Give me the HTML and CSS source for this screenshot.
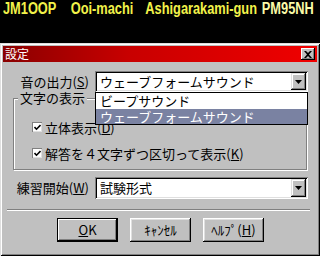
FILE: index.html
```html
<!DOCTYPE html>
<html lang="ja">
<head>
  <meta charset="UTF-8">
  <title>設定</title>
  <link rel="stylesheet" href="styles.css">
</head>
<body>

  <div class="topbar">
    <div class="callsign">
      <span class="call">JM1OOP</span>
      <span class="town">Ooi-machi</span>
      <span class="county">Ashigarakami-gun</span>
      <span class="grid">PM95NH</span>
    </div>
  </div>

  <div class="dialog">
    <div class="titlebar">
      <span class="title">設定</span>
      <span class="close">
        <svg width="8" height="7" viewBox="0 0 8 7"><path d="M0 0h2l2 2 2-2h2L5 3.5 8 7H6L4 5 2 7H0l3-3.5z" fill="#000"/></svg>
      </span>
    </div>

    <div class="body">
      <div class="row">
        <label class="label">音の出力(<u>S</u>)</label>
        <div class="combo">
          <span class="value">ウェーブフォームサウンド</span>
          <span class="drop"><svg width="7" height="4" viewBox="0 0 7 4"><path d="M0 0h7L3.5 4z" fill="#000"/></svg></span>
          <ul class="droplist">
            <li>ビープサウンド</li>
            <li class="selected">ウェーブフォームサウンド</li>
          </ul>
        </div>
      </div>

      <div class="group">
        <span class="legend">文字の表示</span>
        <div class="check">
          <span class="box"><svg width="7" height="7" viewBox="0 0 7 7"><path d="M0.5 3l2 2.2L6.5 1" stroke="#000" stroke-width="1.6" fill="none"/></svg></span>
          立体表示(<u>D</u>)
        </div>
        <div class="check">
          <span class="box"><svg width="7" height="7" viewBox="0 0 7 7"><path d="M0.5 3l2 2.2L6.5 1" stroke="#000" stroke-width="1.6" fill="none"/></svg></span>
          解答を４文字ずつ区切って表示(<u>K</u>)
        </div>
      </div>

      <div class="row row-start">
        <label class="label">練習開始(<u>W</u>)</label>
        <div class="combo tall">
          <span class="value">試験形式</span>
          <span class="drop"><svg width="7" height="4" viewBox="0 0 7 4"><path d="M0 0h7L3.5 4z" fill="#000"/></svg></span>
        </div>
      </div>

      <div class="separator"></div>

      <div class="buttons">
        <button class="btn default"><u>O</u>K</button>
        <button class="btn">ｷｬﾝｾﾙ</button>
        <button class="btn">ﾍﾙﾌﾟ(<u>H</u>)</button>
      </div>
    </div>
  </div>

</body>
</html>
```

FILE: styles.css
```css
* {
  box-sizing: border-box;
}

body {
  margin: 0;
  width: 320px;
  height: 256px;
  overflow: hidden;
  background: #000;
  font-family: "Noto Sans CJK JP", "Liberation Sans", sans-serif;
  font-size: 13px;
  color: #000;
}

/* 上の黒い帯 */
.topbar {
  height: 43px;
  padding-left: 3px;
  white-space: nowrap;
  overflow: hidden;
}

.callsign {
  display: flex;
  transform: scaleX(0.8);
  transform-origin: left top;
  font: bold 16px/18px "Liberation Sans", Arial, sans-serif;
  color: #f2f24a;
}

.town { margin-left: 18px; }
.county { margin-left: 15px; }
.grid { margin-left: 6px; color: #fafaa8; }

/* ダイアログ */
.dialog {
  height: 213px;
  padding: 3px;
  background: #c0c0c0;
  box-shadow: inset 1px 1px #dfdfdf, inset -1px -1px #000, inset 2px 2px #fff, inset -2px -2px #808080;
  display: flex;
  flex-direction: column;
}

.titlebar {
  height: 16px;
  display: flex;
  align-items: center;
  justify-content: space-between;
  padding: 0 2px 0 2px;
  background: linear-gradient(to right, #8a0000, #c80000 40%, #f00000);
}

.title {
  color: #fff;
  font-size: 12px;
  line-height: 14px;
}

.close {
  width: 14px;
  height: 12px;
  display: flex;
  align-items: center;
  justify-content: center;
  background: #c0c0c0;
  box-shadow: inset -1px -1px #000, inset 1px 1px #fff, inset -2px -2px #808080;
}

.body {
  flex: 1;
  padding-top: 9px;
  display: flex;
  flex-direction: column;
}

.row {
  display: flex;
  align-items: center;
  padding-left: 10px;
  position: relative;
  z-index: 2;
}

.label {
  width: 82px;
  padding-right: 6px;
  text-align: right;
  line-height: 16px;
  white-space: nowrap;
}

.combo {
  position: relative;
  width: 213px;
  height: 21px;
  background: #fff;
  display: flex;
  align-items: center;
  padding-left: 5px;
  box-shadow: inset 1px 1px #808080, inset -1px -1px #fff, inset 2px 2px #000, inset -2px -2px #dfdfdf;
}

.combo.tall {
  height: 22px;
}

.value {
  flex: 1;
  line-height: 16px;
  white-space: nowrap;
}

.drop {
  width: 15px;
  align-self: stretch;
  margin: 2px 2px 2px 0;
  display: flex;
  align-items: center;
  justify-content: center;
  background: #c0c0c0;
  box-shadow: inset -1px -1px #000, inset 1px 1px #dfdfdf, inset -2px -2px #808080, inset 2px 2px #fff;
}

.droplist {
  position: absolute;
  top: 100%;
  left: 0;
  right: 0;
  margin: 0;
  padding: 0;
  list-style: none;
  background: #fff;
  border: 1px solid #000;
}

.droplist li {
  height: 15px;
  line-height: 15px;
  padding-left: 4px;
  white-space: nowrap;
}

.droplist li + li {
  margin-top: 1px;
}

.droplist .selected {
  background: #7a82a2;
  color: #fff;
}

/* グループ枠 */
.group {
  position: relative;
  height: 72px;
  margin: 6px 10px 0 10px;
  padding: 20px 0 0 18px;
  border: 1px solid #808080;
  box-shadow: inset 1px 1px #fff, 1px 1px #fff;
  display: flex;
  flex-direction: column;
  gap: 10px;
}

.legend {
  position: absolute;
  top: -8px;
  left: 4px;
  padding: 0 2px;
  background: #c0c0c0;
  line-height: 14px;
}

.check {
  display: flex;
  align-items: center;
  height: 16px;
  white-space: nowrap;
}

.box {
  width: 10px;
  height: 10px;
  margin-right: 3px;
  display: flex;
  align-items: center;
  justify-content: center;
  background: #fff;
  box-shadow: inset 1px 1px #808080, inset -1px -1px #dfdfdf;
}

.row-start {
  margin-top: 7px;
  z-index: 1;
}

.separator {
  height: 2px;
  margin: 10px 7px 0 4px;
  border-top: 1px solid #808080;
  border-bottom: 1px solid #fff;
}

.buttons {
  display: flex;
  gap: 12px;
  margin-top: 7px;
  padding-left: 54px;
}

.btn {
  width: 61px;
  height: 24px;
  padding: 0;
  border: none;
  background: #c0c0c0;
  font: 13px/16px "Noto Sans CJK JP", "Liberation Sans", sans-serif;
  color: #000;
  box-shadow: inset -1px -1px #000, inset 1px 1px #fff, inset -2px -2px #808080, inset 2px 2px #dfdfdf;
}

.btn.default {
  box-shadow: inset 0 0 0 1px #000, inset -2px -2px #000, inset 2px 2px #fff, inset -3px -3px #808080;
}
```
